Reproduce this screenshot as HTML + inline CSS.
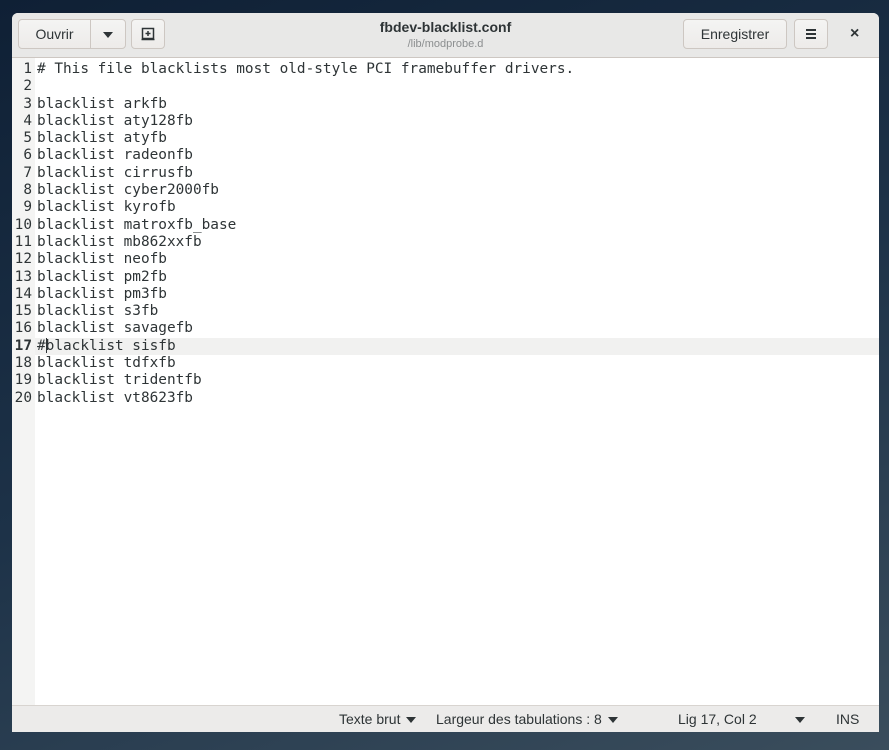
<!DOCTYPE html>
<html><head><meta charset="utf-8"><style>
body{margin:0;width:889px;height:750px;overflow:hidden;background:linear-gradient(160deg,#0f2035 0%,#1d3248 50%,#3a4d5c 100%);font-family:"Liberation Sans",sans-serif;}
.win{position:absolute;left:12px;top:13px;width:867px;height:719px;background:#fff;border-radius:6px 6px 0 0;overflow:hidden;}
.hdr{position:absolute;left:0;top:0;width:867px;height:44px;background:#e8e8e7;border-bottom:1px solid #cdc7c2;}
.btn{position:absolute;top:6px;height:30px;background:linear-gradient(#f4f4f3,#edebe9);border:1px solid #cdc7c2;border-radius:4px;box-sizing:border-box;font-size:14px;color:#2e3436;line-height:28px;text-align:center;}
.title{position:absolute;left:0;width:867px;text-align:center;}
.ed{position:absolute;left:0;top:45px;width:867px;height:648px;}
.gut{position:absolute;left:0;top:0;width:23px;height:648px;background:#f4f4f3;}
.lines{position:absolute;left:0;top:0;font-family:"DejaVu Sans Mono","Liberation Mono",monospace;font-size:14.4px;line-height:17.3px;color:#2e3436;}
.l{height:17.3px;white-space:pre;position:relative;}
.n{display:inline-block;width:20px;margin-right:5px;text-align:right;color:#2e3436;}
.cur{background:linear-gradient(90deg,transparent 23px,#f1f1f0 23px);width:867px;}
.sb{position:absolute;left:0;top:692px;width:867px;height:27px;background:#ecebea;border-top:1px solid #d8d4d0;font-size:14px;color:#2e3436;}
.sb span{position:absolute;top:5px;}
.tri{display:inline-block;width:0;height:0;border-left:5px solid transparent;border-right:5px solid transparent;border-top:6px solid #2e3436;vertical-align:middle;margin-left:6px;}
.caret{display:inline-block;width:1px;height:15px;background:#2e3436;vertical-align:-3px;margin-right:-1px;}
</style></head><body>
<div class="win">
 <div class="hdr">
  <div class="btn" style="left:6px;width:73px;border-radius:4px 0 0 4px;">Ouvrir</div>
  <div class="btn" style="left:78px;width:36px;border-radius:0 4px 4px 0;"><span class="tri" style="margin:0"></span></div>
  <div class="btn" style="left:119px;width:34px;"><svg width="16" height="16" viewBox="0 0 16 16" style="margin-top:6px"><rect x="2.5" y="2.5" width="11" height="10" fill="none" stroke="#2e3436" stroke-width="1.5"/><path d="M8 5v5M5.5 7.5h5M1.5 13.5h13" stroke="#2e3436" stroke-width="1.5"/></svg></div>
  <div class="title" style="top:6px;font-size:14px;font-weight:bold;color:#2e3436;">fbdev-blacklist.conf</div>
  <div class="title" style="top:25px;font-size:11px;color:#8b8e8f;">/lib/modprobe.d</div>
  <div class="btn" style="left:671px;width:104px;">Enregistrer</div>
  <div class="btn" style="left:782px;width:34px;"><svg width="14" height="14" viewBox="0 0 14 14" style="margin-top:7px"><path d="M2 3h10M2 7h10M2 11h10" stroke="#2e3436" stroke-width="2"/></svg></div>
  <div style="position:absolute;left:838px;top:12px;font-size:16px;font-weight:bold;color:#2e3436;">×</div>
 </div>
 <div class="ed">
  <div class="gut"></div>
  <div class="lines" style="top:3px">
<div class="l"><span class="n">1</span># This file blacklists most old-style PCI framebuffer drivers.</div>
<div class="l"><span class="n">2</span></div>
<div class="l"><span class="n">3</span>blacklist arkfb</div>
<div class="l"><span class="n">4</span>blacklist aty128fb</div>
<div class="l"><span class="n">5</span>blacklist atyfb</div>
<div class="l"><span class="n">6</span>blacklist radeonfb</div>
<div class="l"><span class="n">7</span>blacklist cirrusfb</div>
<div class="l"><span class="n">8</span>blacklist cyber2000fb</div>
<div class="l"><span class="n">9</span>blacklist kyrofb</div>
<div class="l"><span class="n">10</span>blacklist matroxfb_base</div>
<div class="l"><span class="n">11</span>blacklist mb862xxfb</div>
<div class="l"><span class="n">12</span>blacklist neofb</div>
<div class="l"><span class="n">13</span>blacklist pm2fb</div>
<div class="l"><span class="n">14</span>blacklist pm3fb</div>
<div class="l"><span class="n">15</span>blacklist s3fb</div>
<div class="l"><span class="n">16</span>blacklist savagefb</div>
<div class="l cur"><span class="n" style="font-weight:bold">17</span>#<i class="caret"></i>blacklist sisfb</div>
<div class="l"><span class="n">18</span>blacklist tdfxfb</div>
<div class="l"><span class="n">19</span>blacklist tridentfb</div>
<div class="l"><span class="n">20</span>blacklist vt8623fb</div>
  </div>
 </div>
 <div class="sb">
  <span style="left:327px">Texte brut<i class="tri"></i></span>
  <span style="left:424px">Largeur des tabulations : 8<i class="tri"></i></span>
  <span style="left:666px">Lig 17, Col 2</span>
  <span style="left:777px"><i class="tri"></i></span>
  <span style="left:824px">INS</span>
 </div>
</div>
</body></html>
